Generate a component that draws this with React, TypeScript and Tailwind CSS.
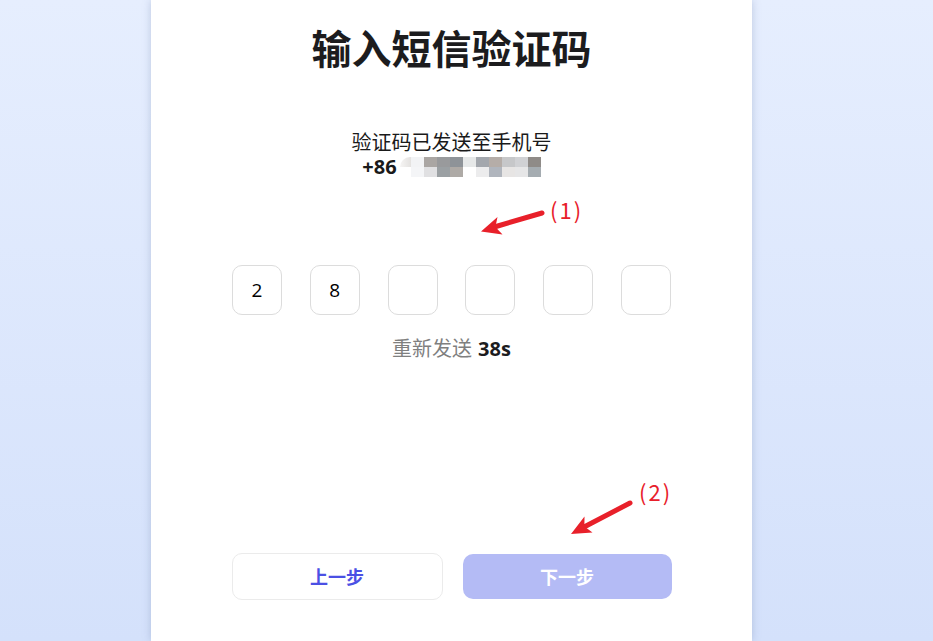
import React from "react";

const mosaicTop = ["#f2f3f5", "#aaa6a3", "#999a9c", "#8e9398", "#e6e8e8", "#a3a7ad", "#b5ada8", "#c6c7c9", "#d0d1d4", "#8f8b88"];
const mosaicBottom = ["#f4f5f7", "#e0e0e2", "#9ba0a3", "#aeaaa6", "#ffffff", "#ececed", "#b0b5bd", "#e7e5e4", "#e6e6e7", "#a5acb1"];

const code = ["2", "8", "", "", "", ""];

const MaskedNumber = () => (
  <div className="flex flex-col">
    <div className="flex h-[10px]">
      <div className="w-[11px] rounded-tl-full bg-gradient-to-r from-[#f6f5f4] to-[#e4e2e0]" />
      {mosaicTop.map((c, i) => (
        <div key={i} className="w-[13px]" style={{ background: c }} />
      ))}
    </div>
    <div className="flex h-[10px]">
      <div className="w-[11px]" />
      {mosaicBottom.map((c, i) => (
        <div key={i} className="w-[13px]" style={{ background: c }} />
      ))}
    </div>
  </div>
);

export default function App() {
  return (
    <div className="relative h-[641px] w-[933px] overflow-hidden bg-gradient-to-b from-[#e6eefe] to-[#d4e1fb] font-['Open_Sans','Noto_Sans_CJK_SC',sans-serif]">
      <div className="ml-[151px] flex h-[641px] w-[601px] flex-col items-center bg-white px-[80px] shadow-[0_0_8px_rgba(110,130,170,0.35)]">
        <h1 className="mt-[17px] text-[40px] leading-[60px] font-bold text-[#1c1c1e] font-['Noto_Sans_CJK_SC',sans-serif]">
          输入短信验证码
        </h1>

        <div className="mt-[52px] flex flex-col items-center text-[20px] text-[#1a1a1a]">
          <div className="h-[25px] leading-[25px] font-['Noto_Sans_CJK_SC',sans-serif]">验证码已发送至手机号</div>
          <div className="flex h-[25px] items-center">
            <span className="font-bold leading-[25px]">+86</span>
            <span className="ml-[3px] mt-[1px]">
              <MaskedNumber />
            </span>
          </div>
        </div>

        <div className="mt-[86px] flex w-[439px] justify-between">
          {code.map((d, i) => (
            <div
              key={i}
              className="flex h-[50px] w-[50px] items-center justify-center rounded-[10px] border border-[#dcdcdc] text-[19px] text-black"
            >
              {d}
            </div>
          ))}
        </div>

        <div className="mt-[20px] text-[20px] leading-[25px]">
          <span className="text-[#7f7f7f] font-['Noto_Sans_CJK_SC',sans-serif]">重新发送</span>
          <span className="ml-[6px] font-bold text-[#1c1c1e]">38s</span>
        </div>

        <div className="mt-[192px] flex w-[440px] gap-[20px]">
          <button className="h-[47px] flex-1 rounded-[10px] border border-[#ebebeb] bg-white text-[18px] font-bold text-[#4b50e4] font-['Noto_Sans_CJK_SC',sans-serif]">
            上一步
          </button>
          <button className="mt-[1px] h-[45px] flex-1 rounded-[10px] bg-[#b4bbf5] text-[18px] font-bold text-white font-['Noto_Sans_CJK_SC',sans-serif]">
            下一步
          </button>
        </div>
      </div>

      {/* annotation arrows */}
      <svg className="pointer-events-none absolute inset-0" width="933" height="641" viewBox="0 0 933 641">
        <line x1="542" y1="213" x2="496" y2="226.5" stroke="#e8202a" strokeWidth="5" strokeLinecap="round" />
        <polygon points="481,231.5 497.5,217 495.4,227 502.5,234.5" fill="#e8202a" />
        <line x1="630" y1="503" x2="585" y2="526.5" stroke="#e8202a" strokeWidth="5" strokeLinecap="round" />
        <polygon points="571,534 584.5,516.5 584.4,526.6 592.5,532.5" fill="#e8202a" />
      </svg>
      <div className="absolute left-[550px] top-[195px] text-[22px] leading-[28px] tracking-[2px] text-[#e8202a] font-['Noto_Sans_CJK_SC',sans-serif]">
        (1)
      </div>
      <div className="absolute left-[639px] top-[477px] text-[22px] leading-[28px] tracking-[2px] text-[#e8202a] font-['Noto_Sans_CJK_SC',sans-serif]">
        (2)
      </div>
    </div>
  );
}
